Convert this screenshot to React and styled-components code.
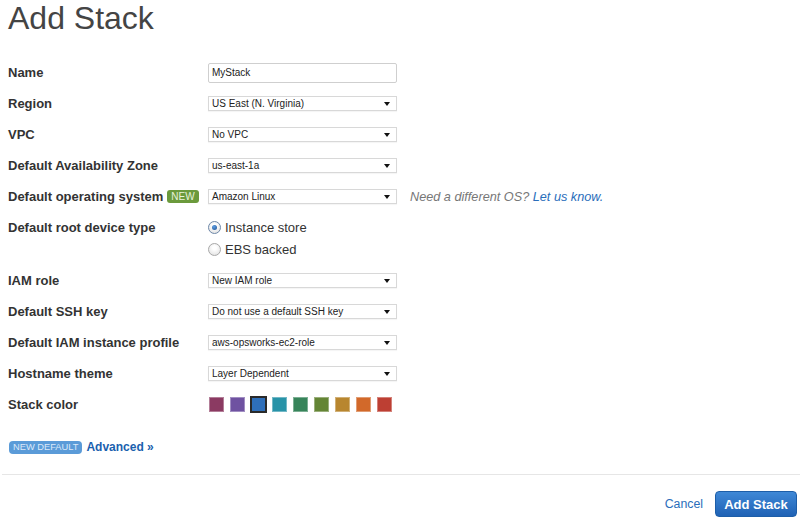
import React from "react";
import styled, { createGlobalStyle } from "styled-components";

const GlobalStyle = createGlobalStyle`
  html, body {
    margin: 0;
    padding: 0;
    background: #fff;
  }
  body {
    font-family: "Liberation Sans", Arial, sans-serif;
    color: #333;
  }
`;

const Page = styled.div`
  padding: 0 3px 0 8px;
`;

const Title = styled.h1`
  margin: 0 0 21px 0;
  font-size: 32px;
  line-height: 36px;
  font-weight: normal;
  color: #444;
`;

const Row = styled.div`
  display: flex;
  align-items: flex-start;
`;

const Label = styled.div`
  width: 200px;
  height: 31px;
  display: flex;
  align-items: center;
  font-size: 13px;
  font-weight: bold;
  color: #333;
`;

const Field = styled.div`
  height: 31px;
  display: flex;
  align-items: center;
`;

const TextInput = styled.div`
  width: 189px;
  height: 20px;
  box-sizing: border-box;
  border: 1px solid #cfcfcf;
  border-radius: 2px;
  padding-left: 3px;
  font-size: 10px;
  line-height: 18px;
  color: #222;
`;

const Select = styled.div`
  position: relative;
  width: 189px;
  height: 15px;
  box-sizing: border-box;
  border: 1px solid #d8d8d8;
  box-shadow: 0 1px 1px rgba(0, 0, 0, 0.04);
  padding-left: 3px;
  font-size: 10px;
  line-height: 13px;
  color: #222;
  &::after {
    content: "";
    position: absolute;
    right: 6px;
    top: 5px;
    border-left: 3px solid transparent;
    border-right: 3px solid transparent;
    border-top: 4px solid #111;
  }
`;

const Badge = styled.span`
  display: inline-block;
  margin-left: 4px;
  padding: 0 4px;
  height: 13px;
  line-height: 13px;
  border-radius: 3px;
  font-size: 10px;
  font-weight: normal;
  color: #e8f2dc;
  background: #6b9a3c;
`;

const Hint = styled.span`
  margin-left: 13px;
  font-size: 12.7px;
  font-style: italic;
  color: #777;
`;

const Link = styled.a`
  color: ${(p) => (p.$dark ? "#1b5fae" : "#2a6ebb")};
  font-weight: ${(p) => (p.$bold ? "bold" : "normal")};
  text-decoration: none;
`;

const RadioGroup = styled.div`
  display: flex;
  flex-direction: column;
  padding: 4px 0 5px;
`;

const RadioRow = styled.label`
  display: flex;
  align-items: center;
  height: 22px;
  font-size: 13px;
  color: #333;
`;

const RadioDot = styled.span`
  width: 11px;
  height: 11px;
  border-radius: 50%;
  border: 1px solid ${(p) => (p.$on ? "#6d87a8" : "#a8a8a8")};
  background: radial-gradient(circle at 50% 35%, #fff 20%, #dcdcdc 100%);
  margin-right: 4px;
  position: relative;
  &::after {
    content: "";
    display: ${(p) => (p.$on ? "block" : "none")};
    position: absolute;
    left: 3px;
    top: 3px;
    width: 5px;
    height: 5px;
    border-radius: 50%;
    background: radial-gradient(circle at 40% 35%, #5c9ee4, #1e4f8f);
  }
`;

const Swatches = styled.div`
  display: flex;
  align-items: center;
  gap: 6px;
  padding-left: 1px;
`;

const Swatch = styled.span`
  box-sizing: border-box;
  width: ${(p) => (p.$active ? 17 : 15)}px;
  height: ${(p) => (p.$active ? 17 : 15)}px;
  margin: ${(p) => (p.$active ? "0 -1px" : "0")};
  background: ${(p) => p.$color};
  border: ${(p) => (p.$active ? "2px solid #2a2a2a" : "1px solid rgba(255,255,255,0.35)")};
`;

const AdvancedLine = styled.div`
  margin-top: 17px;
  height: 20px;
  display: flex;
  align-items: center;
  font-size: 12px;
`;

const DefaultBadge = styled.span`
  display: inline-block;
  padding: 0 4px;
  height: 13px;
  line-height: 13px;
  border-radius: 4px;
  background: #5b9bd8;
  color: #dbe9f8;
  font-size: 9.3px;
  margin: 0 4px 0 1px;
`;

const Divider = styled.div`
  margin: 17px -3px 0 -6px;
  border-top: 1px solid #e6e6e6;
`;

const Footer = styled.div`
  display: flex;
  justify-content: flex-end;
  align-items: center;
  gap: 12px;
  margin-top: 16px;
  font-size: 12.3px;
`;

const PrimaryButton = styled.button`
  height: 26px;
  width: 82px;
  border: 1px solid #1d5ea8;
  border-radius: 4px;
  background: linear-gradient(#3f88d6, #1f62b5);
  color: #fff;
  font-family: "Liberation Sans", Arial, sans-serif;
  font-size: 13px;
  font-weight: bold;
  padding: 0;
`;

const colors = [
  "#8b3a62",
  "#6f52a1",
  "#2e6fba",
  "#2893a8",
  "#37845a",
  "#648535",
  "#b8862f",
  "#d2692a",
  "#bd3f33",
];

const selects = [
  ["Region", "US East (N. Virginia)"],
  ["VPC", "No VPC"],
  ["Default Availability Zone", "us-east-1a"],
];

const selectsAfter = [
  ["IAM role", "New IAM role"],
  ["Default SSH key", "Do not use a default SSH key"],
  ["Default IAM instance profile", "aws-opsworks-ec2-role"],
  ["Hostname theme", "Layer Dependent"],
];

export default function App() {
  return (
    <Page>
      <GlobalStyle />
      <Title>Add Stack</Title>

      <Row>
        <Label>Name</Label>
        <Field>
          <TextInput>MyStack</TextInput>
        </Field>
      </Row>

      {selects.map(([label, value]) => (
        <Row key={label}>
          <Label>{label}</Label>
          <Field>
            <Select>{value}</Select>
          </Field>
        </Row>
      ))}

      <Row>
        <Label>
          Default operating system
          <Badge>NEW</Badge>
        </Label>
        <Field>
          <Select>Amazon Linux</Select>
          <Hint>
            Need a different OS? <Link href="#">Let us know.</Link>
          </Hint>
        </Field>
      </Row>

      <Row>
        <Label>Default root device type</Label>
        <RadioGroup>
          <RadioRow>
            <RadioDot $on />
            Instance store
          </RadioRow>
          <RadioRow>
            <RadioDot />
            EBS backed
          </RadioRow>
        </RadioGroup>
      </Row>

      {selectsAfter.map(([label, value]) => (
        <Row key={label}>
          <Label>{label}</Label>
          <Field>
            <Select>{value}</Select>
          </Field>
        </Row>
      ))}

      <Row>
        <Label>Stack color</Label>
        <Field>
          <Swatches>
            {colors.map((c, i) => (
              <Swatch key={c} $color={c} $active={i === 2} />
            ))}
          </Swatches>
        </Field>
      </Row>

      <AdvancedLine>
        <DefaultBadge>NEW DEFAULT</DefaultBadge>
        <Link href="#" $bold $dark>
          Advanced »
        </Link>
      </AdvancedLine>

      <Divider />

      <Footer>
        <Link href="#">Cancel</Link>
        <PrimaryButton>Add Stack</PrimaryButton>
      </Footer>
    </Page>
  );
}
